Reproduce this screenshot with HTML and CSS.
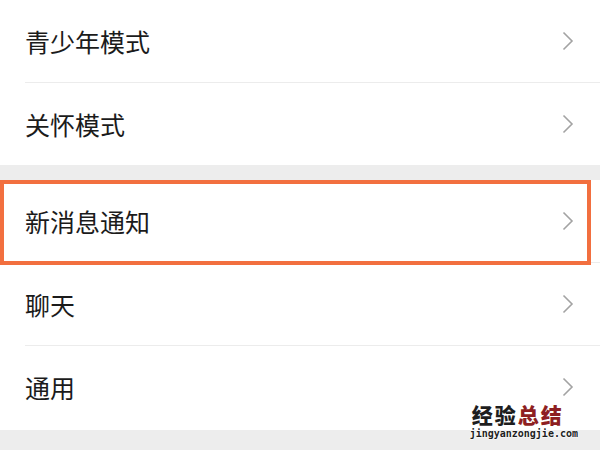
FILE: index.html
```html
<!DOCTYPE html>
<html lang="zh-CN">
<head>
    <meta charset="UTF-8">
    <title>设置</title>
    <link rel="stylesheet" href="styles.css">
</head>
<body>
    <div class="settings">
        <div class="group">
            <div class="item">
                <span class="label">青少年模式</span>
                <svg class="arrow" viewBox="0 0 12 20"><path d="M1.5 1.5 L10 10 L1.5 18.5"/></svg>
            </div>
            <div class="item">
                <span class="label">关怀模式</span>
                <svg class="arrow" viewBox="0 0 12 20"><path d="M1.5 1.5 L10 10 L1.5 18.5"/></svg>
            </div>
        </div>
        <div class="group last">
            <div class="item marked">
                <span class="label">新消息通知</span>
                <svg class="arrow" viewBox="0 0 12 20"><path d="M1.5 1.5 L10 10 L1.5 18.5"/></svg>
            </div>
            <div class="item">
                <span class="label">聊天</span>
                <svg class="arrow" viewBox="0 0 12 20"><path d="M1.5 1.5 L10 10 L1.5 18.5"/></svg>
            </div>
            <div class="item">
                <span class="label">通用</span>
                <svg class="arrow" viewBox="0 0 12 20"><path d="M1.5 1.5 L10 10 L1.5 18.5"/></svg>
            </div>
        </div>
    </div>
    <div class="watermark">
        <div class="wm-title"><span class="dark">经验</span><span class="red">总结</span></div>
        <div class="wm-url">jingyanzongjie.com</div>
    </div>
</body>
</html>
```

FILE: styles.css
```css
html, body { margin: 0; padding: 0; }
body {
    width: 600px;
    height: 450px;
    overflow: hidden;
    background: #ededed;
    font-family: "Noto Sans CJK SC", "Noto Sans", sans-serif;
    position: relative;
}
.settings { display: flex; flex-direction: column; gap: 15px; }
.group { background: #fff; }
.group.last { padding-bottom: 2px; }
.item {
    height: 82px;
    display: flex;
    align-items: center;
    justify-content: space-between;
    padding: 0 26px 0 25px;
    position: relative;
}
.item + .item { border-top: 1px solid #ececec; }
.item + .item::before {
    content: '';
    position: absolute;
    left: 0;
    top: -1px;
    width: 25px;
    height: 1px;
    background: #fff;
}
.label { font-size: 25px; color: #1b1b1b; line-height: 1; }
.arrow { width: 12px; height: 20px; fill: none; stroke: #a3a3a3; stroke-width: 1.6; }
.marked::after {
    content: '';
    position: absolute;
    left: 0;
    top: 0;
    right: 9px;
    bottom: -3px;
    border: 4px solid #f26f3f;
    z-index: 2;
}
.watermark {
    position: absolute;
    right: 22px;
    bottom: 11px;
    text-align: center;
    z-index: 3;
}
.wm-title {
    font-size: 21px;
    font-weight: 900;
    line-height: 22px;
    letter-spacing: 2px;
    margin-bottom: 3px;
    padding-right: 12px;
    text-shadow: 0 0 2px #fff, 0 0 2px #fff;
}
.dark { color: #1e1e1e; }
.red { color: #8e1f22; }
.wm-url {
    font-family: "DejaVu Sans Mono", monospace;
    font-size: 10px;
    font-weight: bold;
    line-height: 11px;
    color: #1e1e1e;
    text-shadow: 0 0 2px #fff, 0 0 2px #fff, 0 0 2px #fff;
}
```
